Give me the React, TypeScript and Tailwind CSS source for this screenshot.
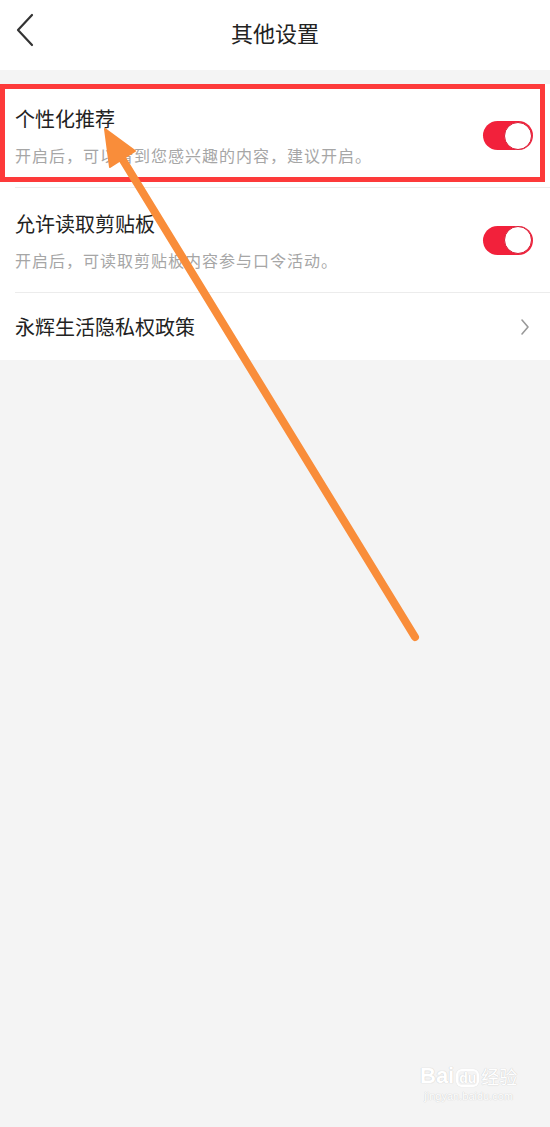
import React from "react";

const font = { fontFamily: '"Noto Sans CJK SC", "Noto Sans", sans-serif' };

function Toggle() {
  return (
    <div className="relative h-[29px] w-[50px] shrink-0 rounded-full bg-[#f2213b]">
      <div className="absolute right-[1px] top-[0.5px] h-[28px] w-[28px] rounded-full border border-[#d81e36] bg-white" />
    </div>
  );
}

export default function App() {
  return (
    <div className="relative min-h-[1127px] w-[550px] overflow-hidden bg-[#f4f4f4]" style={font}>
      {/* Header */}
      <div className="relative flex h-[70px] items-center justify-center bg-white pb-[6px]">
        <svg className="absolute left-[14px] top-[13px]" width="22" height="34" viewBox="0 0 22 34">
          <polyline points="18,2 4,17 18,32" fill="none" stroke="#333" strokeWidth="2.2" strokeLinecap="round" strokeLinejoin="round" />
        </svg>
        <span className="text-[22px] leading-none text-[#222]" style={{ fontFamily: '"Noto Sans CJK SC", serif' }}>其他设置</span>
      </div>

      <div className="h-[14px]" />

      {/* List */}
      <div className="bg-white">
        <div className="flex h-[103px] items-center justify-between pl-[15px] pr-[17px]">
          <div className="flex flex-col gap-[11px]">
            <div className="text-[20px] leading-[28px] text-[#222]">个性化推荐</div>
            <div className="text-[16px] leading-[22px] tracking-[1px] text-[#a6a6a6]">开启后，可以看到您感兴趣的内容，建议开启。</div>
          </div>
          <Toggle />
        </div>
        <div className="ml-[15px] h-px bg-[#ececec]" />
        <div className="flex h-[104px] items-center justify-between pl-[15px] pr-[17px]">
          <div className="flex flex-col gap-[11px]">
            <div className="text-[20px] leading-[28px] text-[#222]">允许读取剪贴板</div>
            <div className="text-[16px] leading-[22px] tracking-[1px] text-[#a6a6a6]">开启后，可读取剪贴板内容参与口令活动。</div>
          </div>
          <Toggle />
        </div>
        <div className="ml-[15px] h-px bg-[#ececec]" />
        <div className="flex h-[67px] items-center justify-between pl-[15px] pr-[20px]">
          <div className="text-[20px] leading-[28px] text-[#222]">永辉生活隐私权政策</div>
          <svg width="10" height="18" viewBox="0 0 10 18">
            <polyline points="2,2 8,9 2,16" fill="none" stroke="#999" strokeWidth="1.6" strokeLinecap="round" strokeLinejoin="round" />
          </svg>
        </div>
      </div>

      {/* Red highlight box */}
      <div className="pointer-events-none absolute left-0 top-[84px] h-[98px] w-[545px] border-[5px] border-[#fd3a3a]" />

      {/* Orange arrow */}
      <svg className="pointer-events-none absolute left-0 top-0" width="550" height="700" viewBox="0 0 550 700">
        <line x1="415" y1="637" x2="118" y2="152" stroke="#f98d3a" strokeWidth="8" strokeLinecap="round" />
        <polygon points="105,129 135,151 110,167" fill="#f98d3a" stroke="#f98d3a" strokeWidth="2" strokeLinejoin="round" />
      </svg>

      {/* Watermark */}
      <div className="pointer-events-none absolute left-[420px] top-[1065px] flex flex-col items-center text-white" style={{ textShadow: "0 0 1px #cfcfcf, 0 0 1px #cfcfcf", fontFamily: '"Liberation Sans", "Noto Sans CJK SC", sans-serif' }}>
        <div className="flex items-end text-[22px] font-bold leading-none">
          <span>Bai</span>
          <span className="ml-[2px] rounded-[6px] border-2 border-white px-[1px] text-[14px]" style={{ boxShadow: "0 0 1px #cfcfcf" }}>du</span>
          <span className="ml-[2px] text-[18px] font-normal">经验</span>
        </div>
        <div className="mt-[4px] text-[11px] leading-none">jingyan.baidu.com</div>
      </div>
    </div>
  );
}
